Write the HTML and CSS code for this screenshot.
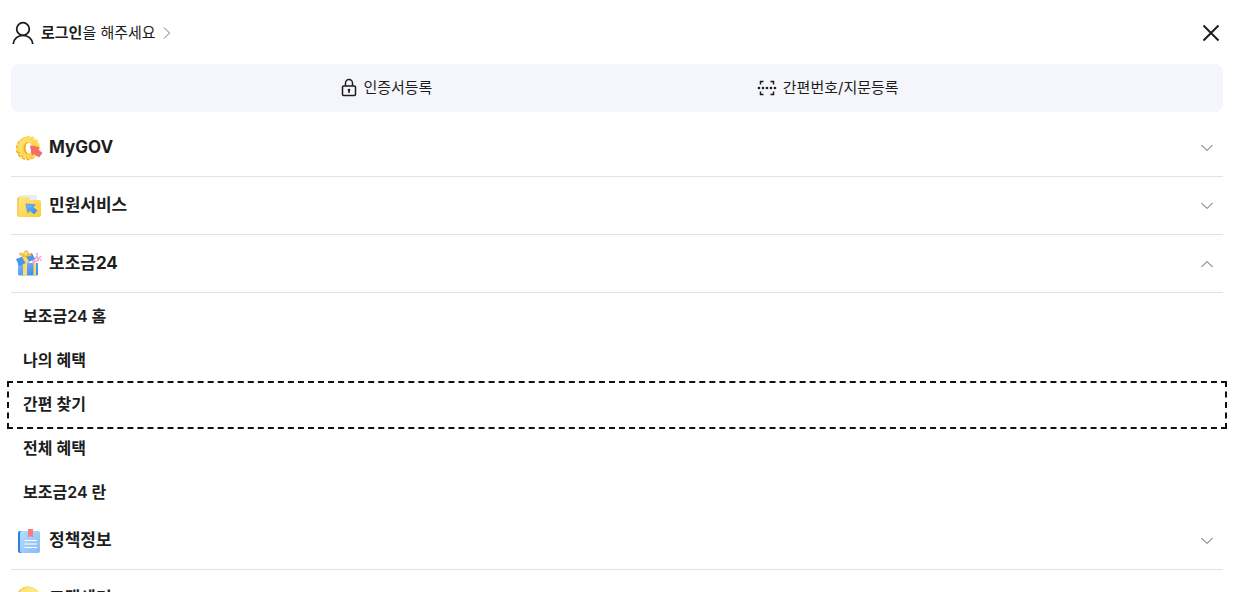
FILE: index.html
```
<!DOCTYPE html>
<html lang="ko">
<head>
  <meta charset="UTF-8">
  <meta name="viewport" content="width=device-width, initial-scale=1.0">
  <title>전체메뉴</title>
  <link rel="stylesheet" href="styles.css">
</head>
<body>
  <header class="menu-header">
    <a href="#" class="login-link">
      <svg class="icon-user" viewBox="0 0 22 24" aria-hidden="true"><circle cx="11" cy="8" r="6.300"/><path d="M1.200 23C1.800 17.500 6 14.300 11 14.300s9.200 3.200 9.800 8.700"/></svg>
      <span><strong>로그인</strong>을 해주세요</span>
      <svg class="icon-next" viewBox="0 0 8 12" aria-hidden="true"><path d="M1 .5 6.500 6 1 11.500"/></svg>
    </a>
    <button type="button" class="btn-close" aria-label="닫기">
      <svg viewBox="0 0 18 18" aria-hidden="true"><path d="m1.500 1.500 15 15m0-15-15 15"/></svg>
    </button>
  </header>

  <div class="quick-menu">
    <a href="#" class="quick-link">
      <svg class="icon-lock" viewBox="0 0 16 20" aria-hidden="true"><rect x="1.500" y="8" width="13" height="9.500" rx="1"/><path d="M4.500 8V5a3.500 3.500 0 0 1 7 0v3M8 12v3"/><circle cx="8" cy="12" r=".6"/></svg>
      <span>인증서등록</span>
    </a>
    <a href="#" class="quick-link">
      <svg class="icon-scan" viewBox="0 0 20 18" aria-hidden="true"><path d="M3.500 5.500v-3h3m7 0h3v3m0 7v3h-3m-7 0h-3v-3"/><g><circle cx="2" cy="9" r="1.300"/><circle cx="6" cy="9" r="1.300"/><circle cx="10" cy="9" r="1.300"/><circle cx="14" cy="9" r="1.300"/><circle cx="18" cy="9" r="1.300"/></g></svg>
      <span>간편번호/지문등록</span>
    </a>
  </div>

  <nav>
    <button type="button" class="menu-title" aria-expanded="false">
      <svg class="menu-icon" viewBox="0 0 28 28" aria-hidden="true">
        <defs>
          <linearGradient id="gold" x2="1" y2="1"><stop stop-color="#ffe680"/><stop offset="1" stop-color="#fccc30"/></linearGradient>
          <linearGradient id="sky" x2="1" y2="1"><stop stop-color="#7cbcff"/><stop offset="1" stop-color="#3484ea"/></linearGradient>
        </defs>
        <circle cx="12.500" cy="14.500" r="10.500" fill="#efb42f" stroke="#efb42f" stroke-width="2.400" stroke-dasharray="3.300 1.410"/>
        <circle cx="13.500" cy="13.500" r="10.300" fill="url(#gold)" stroke="#ffdc59" stroke-width="2.400" stroke-dasharray="3.200 1.423"/>
        <ellipse cx="12.800" cy="14.200" rx="4.200" ry="6" fill="#e9ae2b"/>
        <ellipse cx="13.800" cy="14.200" rx="3.200" ry="5.500" fill="#fff"/>
        <path d="m15.500 12 8.500 1.500-1.300 2.200 4.300 3.300-3.200 4-4.500-3.700-2 1.700z" fill="#f76a6a" stroke="#f76a6a" stroke-linejoin="round"/>
      </svg>
      <span>MyGOV</span>
      <svg class="arrow" viewBox="0 0 12 8" aria-hidden="true"><path d="m.5 1 5.500 5.500L11.500 1"/></svg>
    </button>
    <button type="button" class="menu-title" aria-expanded="false">
      <svg class="menu-icon" viewBox="0 0 28 28" aria-hidden="true">
        <path d="M4 5q0-2 2-2h14q2 0 2 2v16H4z" fill="#e9edf2"/>
        <path d="M2 7q0-2 2-2h4v20H4q-2 0-2-2z" fill="#f2cf69"/>
        <path d="M4 7q0-2 2-2h7q2 0 2 3h9q2 0 2 2v13q0 2-2 2H4z" fill="url(#gold)"/>
        <path d="m11 12 9 .8-2 2.500 4 3.200-3 3.500-4-3.500-2.200 2.200z" fill="url(#sky)" stroke="#559ff2" stroke-linejoin="round"/>
      </svg>
      <span>민원서비스</span>
      <svg class="arrow" viewBox="0 0 12 8" aria-hidden="true"><path d="m.5 1 5.500 5.500L11.500 1"/></svg>
    </button>
    <button type="button" class="menu-title" aria-expanded="true" aria-controls="subsidy-menu">
      <svg class="menu-icon" viewBox="0 0 28 28" aria-hidden="true">
        <path d="M3 13h20v11q0 1.500-1.500 1.500h-17Q3 25.500 3 24z" fill="url(#sky)"/>
        <path d="M8 13h4v12.500H8zM18.500 13h2.500v12.500h-2.500z" fill="#ffdb64"/>
        <path d="m13 13 4-5 1 4 4-6 1 4 3-4m-9 7 7-3" fill="none" stroke="#f5a8d8" stroke-width="1.500"/>
        <path d="m1 9 16-6 3 6-16 7z" fill="#4995eb"/>
        <path d="m7 6.800 3.500-1.300L14 11.600l-3.500 1.500z" fill="#ffda5c"/>
        <path d="M9 6C2 6 4 0 9 5c-1-6 7-5 3 0 6-3 6 2-1 1z" fill="#ffe07a" stroke="#dfaa32"/>
        <circle cx="22" cy="4" r="1" fill="#ef9bd1"/><circle cx="26" cy="10" r="1" fill="#ddb5f5"/>
      </svg>
      <span>보조금24</span>
      <svg class="arrow" viewBox="0 0 12 8" aria-hidden="true"><path d="m.5 1 5.500 5.500L11.500 1"/></svg>
    </button>
    <ul class="sub-menu" id="subsidy-menu">
      <li><a href="#">보조금24 홈</a></li>
      <li><a href="#">나의 혜택</a></li>
      <li><a href="#" class="focused">간편 찾기</a></li>
      <li><a href="#">전체 혜택</a></li>
      <li><a href="#">보조금24 란</a></li>
    </ul>
    <button type="button" class="menu-title" aria-expanded="false">
      <svg class="menu-icon" viewBox="0 0 28 28" aria-hidden="true">
        <defs>
          <linearGradient id="paper" x2="1" y2="1"><stop stop-color="#b5dcff"/><stop offset="1" stop-color="#88bcf7"/></linearGradient>
        </defs>
        <rect x="3" y="4" width="8" height="22" rx="2" fill="#287fe8"/>
        <rect x="5" y="4" width="20" height="22" rx="2" fill="url(#paper)"/>
        <path d="M13 2h5v8.500L15.500 9 13 10.500z" fill="#f67c80"/>
        <path d="M9.500 13.500h12.500M9.500 17h12.500M9.500 20.500h12.500" stroke="#fff" stroke-width="1.200"/>
      </svg>
      <span>정책정보</span>
      <svg class="arrow" viewBox="0 0 12 8" aria-hidden="true"><path d="m.5 1 5.500 5.500L11.500 1"/></svg>
    </button>
    <button type="button" class="menu-title" aria-expanded="false">
      <svg class="menu-icon" viewBox="0 0 28 28" aria-hidden="true">
        <circle cx="13" cy="13" r="11.500" fill="#f6c83e"/>
        <circle cx="14.500" cy="13.500" r="11.500" fill="#ffe680"/>
        <path d="M10 11q0-3 4-3t4 3-4 4v2m0 2v2" fill="none" stroke="#438bea" stroke-width="2"/>
      </svg>
      <span>고객센터</span>
      <svg class="arrow" viewBox="0 0 12 8" aria-hidden="true"><path d="m.5 1 5.500 5.500L11.500 1"/></svg>
    </button>
  </nav>

  <script>
    document.querySelectorAll('.menu-title').forEach(function(title) {
      title.addEventListener('click', function() {
        const open = title.getAttribute('aria-expanded') === 'true';
        title.setAttribute('aria-expanded', String(!open));
      });
    });
  </script>
</body>
</html>
```
FILE: styles.css
```
:root {
  --text-color: #1d1d1d;
  --arrow-color: #555;
  --border-color: #e1e2e9;
  --background-light: #f5f6fb;
}

* {
  box-sizing: border-box;
  margin: 0;
  padding: 0;
}

body {
  font-family: Inter, "Noto Sans CJK KR", sans-serif;
  font-size: 15px;
  line-height: 24px;
  color: var(--text-color);
  background-color: #fff;
  padding: 0 16px 0 11px;
}

a {
  color: inherit;
  text-decoration: none;
}

button {
  font-family: inherit;
  color: inherit;
  background: none;
  border: none;
  cursor: pointer;
}

svg {
  display: block;
  flex: none;
}

.menu-header {
  display: flex;
  align-items: center;
  justify-content: space-between;
  height: 64px;
  padding-top: 2px;
}

.login-link {
  display: flex;
  align-items: center;
  gap: 7px;
  padding-left: 1px;
}

.icon-user,
.icon-next,
.btn-close svg,
.icon-lock,
.icon-scan,
.arrow {
  fill: none;
  stroke: currentColor;
}

.icon-user {
  width: 22px;
  height: 24px;
  stroke-width: 1.8;
}

.icon-next {
  width: 8px;
  height: 12px;
  color: #777;
}

.btn-close {
  padding: 3px;
}

.btn-close svg {
  width: 18px;
  height: 18px;
  stroke-width: 2;
}

.quick-menu {
  display: flex;
  align-items: center;
  justify-content: space-evenly;
  height: 48px;
  margin-bottom: 7px;
  padding-left: 6px;
  border-radius: 8px;
  background-color: var(--background-light);
}

.quick-link {
  display: flex;
  align-items: center;
  gap: 6px;
}

.icon-lock {
  width: 16px;
  height: 20px;
  stroke-width: 1.5;
}

.icon-scan {
  width: 20px;
  height: 18px;
  stroke-width: 1.5;
}

.icon-scan g {
  fill: currentColor;
  stroke: none;
}

.menu-title {
  display: flex;
  align-items: center;
  gap: 6px;
  width: 100%;
  height: 58px;
  padding: 0 10px 0 4px;
  border-bottom: 1px solid var(--border-color);
  font-size: 17px;
  font-weight: 700;
  line-height: 28px;
}

.menu-title span {
  padding-bottom: 2px;
}

.menu-icon {
  width: 28px;
  height: 28px;
}

.arrow {
  width: 12px;
  height: 8px;
  margin-left: auto;
  color: var(--arrow-color);
}

.menu-title[aria-expanded="true"] .arrow {
  transform: rotate(180deg);
}

.menu-title[aria-expanded="false"] + .sub-menu {
  display: none;
}

.sub-menu {
  display: grid;
  gap: 4px;
  margin-bottom: -1px;
  padding-top: 4px;
  list-style: none;
}

.sub-menu a {
  display: block;
  padding: 7px 12px 9px;
  font-size: 16px;
  font-weight: 600;
}

.sub-menu a.focused,
.sub-menu a:focus-visible {
  outline: 2px dashed #111;
  outline-offset: 2px;
}
```
